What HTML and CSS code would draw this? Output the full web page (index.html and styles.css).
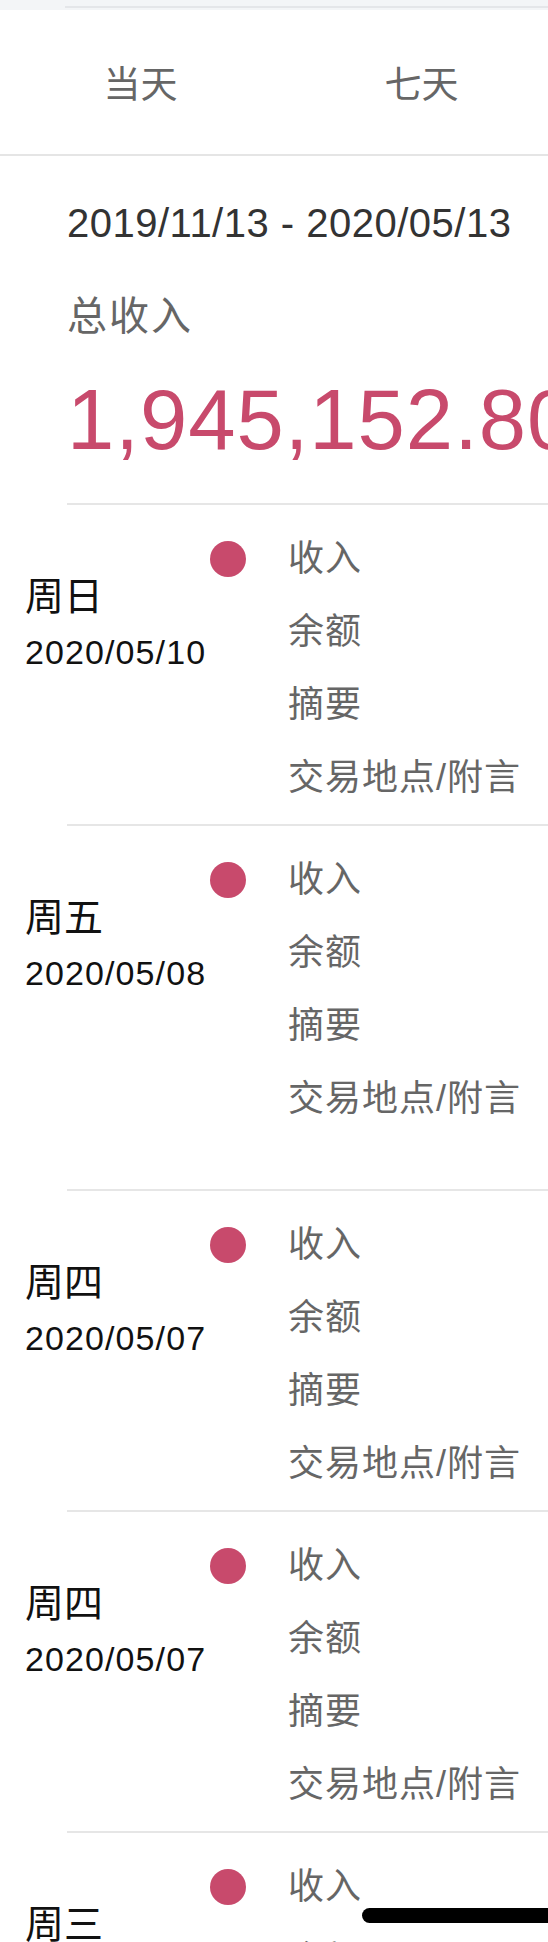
FILE: index.html
```html
<!DOCTYPE html>
<html lang="zh-CN">

<head>
    <meta charset="UTF-8" />
    <meta name="viewport" content="width=device-width, initial-scale=1.0" />
    <title>收入明细</title>
    <link rel="stylesheet" href="styles.css">
</head>

<body>
    <div class="topbar">
        <div class="topbar-line"></div>
    </div>

    <div class="tabs">
        <div class="tab">当天</div>
        <div class="tab">七天</div>
    </div>

    <div class="summary">
        <div class="summary-range">2019/11/13 - 2020/05/13</div>
        <div class="summary-label">总收入</div>
        <div class="summary-amount">1,945,152.80</div>
    </div>
    <div class="divider"></div>

    <div class="record">
        <div class="record-day">
            <div class="record-weekday">周日</div>
            <div class="record-date">2020/05/10</div>
        </div>
        <div class="record-mark"><span class="dot"></span></div>
        <ul class="record-fields">
            <li>收入</li>
            <li>余额</li>
            <li>摘要</li>
            <li>交易地点/附言</li>
        </ul>
    </div>
    <div class="divider"></div>

    <div class="record">
        <div class="record-day">
            <div class="record-weekday">周五</div>
            <div class="record-date">2020/05/08</div>
        </div>
        <div class="record-mark"><span class="dot"></span></div>
        <ul class="record-fields">
            <li>收入</li>
            <li>余额</li>
            <li>摘要</li>
            <li>交易地点/附言</li>
            <li class="field-empty"></li>
        </ul>
    </div>
    <div class="divider"></div>

    <div class="record">
        <div class="record-day">
            <div class="record-weekday">周四</div>
            <div class="record-date">2020/05/07</div>
        </div>
        <div class="record-mark"><span class="dot"></span></div>
        <ul class="record-fields">
            <li>收入</li>
            <li>余额</li>
            <li>摘要</li>
            <li>交易地点/附言</li>
        </ul>
    </div>
    <div class="divider"></div>

    <div class="record">
        <div class="record-day">
            <div class="record-weekday">周四</div>
            <div class="record-date">2020/05/07</div>
        </div>
        <div class="record-mark"><span class="dot"></span></div>
        <ul class="record-fields">
            <li>收入</li>
            <li>余额</li>
            <li>摘要</li>
            <li>交易地点/附言</li>
        </ul>
    </div>
    <div class="divider"></div>

    <div class="record">
        <div class="record-day">
            <div class="record-weekday">周三</div>
            <div class="record-date">2020/05/06</div>
        </div>
        <div class="record-mark"><span class="dot"></span></div>
        <ul class="record-fields">
            <li>收入</li>
            <li>余额</li>
            <li>摘要</li>
            <li>交易地点/附言</li>
        </ul>
    </div>

    <div class="home-indicator"></div>
</body>

</html>
```

FILE: styles.css
```css
html,
body {
    overflow-x: hidden;
}

body {
    margin: 0;
    padding: 0;
    background-color: #ffffff;
    font-family: 'Liberation Sans', 'Noto Sans CJK SC', sans-serif;
    color: #333;
}

.topbar {
    height: 10px;
    padding-top: 6px;
    box-sizing: border-box;
    background-color: #f3f5f7;
}

.topbar-line {
    margin-left: 65px;
    height: 2px;
    background-color: #e4e6e9;
}

.tabs {
    display: grid;
    grid-template-columns: 281px 281px;
    height: 144px;
    border-bottom: 2px solid #e5e5e5;
}

.tab {
    display: flex;
    align-items: center;
    justify-content: center;
    font-size: 37px;
    color: #666;
}

.summary {
    padding: 39px 0 33px 67px;
    white-space: nowrap;
}

.summary-range {
    font-size: 40px;
    line-height: 56px;
    letter-spacing: 0.5px;
    color: #333;
}

.summary-label {
    margin-top: 37px;
    font-size: 40px;
    line-height: 56px;
    letter-spacing: 2px;
    color: #666;
}

.summary-amount {
    margin-top: 26px;
    font-size: 85px;
    line-height: 100px;
    letter-spacing: 1px;
    color: #c84a6c;
}

.divider {
    margin-left: 67px;
    height: 2px;
    background-color: #e6e6e6;
}

.record {
    display: flex;
    padding: 17px 0 10px 25px;
}

.record-day {
    width: 185px;
    padding-top: 49px;
    color: #111;
}

.record-weekday {
    font-size: 39px;
    line-height: 52px;
}

.record-date {
    font-size: 34px;
    line-height: 58px;
    letter-spacing: 1.1px;
}

.record-mark {
    display: flex;
    align-items: center;
    width: 36px;
    height: 73px;
}

.dot {
    width: 36px;
    height: 36px;
    border-radius: 50%;
    background-color: #c84a6c;
}

.record-fields {
    list-style: none;
    margin: 0 0 0 42px;
    padding: 0;
    font-size: 36px;
    line-height: 73px;
    letter-spacing: 1px;
    color: #666;
    white-space: nowrap;
}

.field-empty {
    height: 44px;
}

.home-indicator {
    position: fixed;
    left: 362px;
    right: -20px;
    bottom: 19px;
    height: 15px;
    border-radius: 8px;
    background-color: #000;
}
```
